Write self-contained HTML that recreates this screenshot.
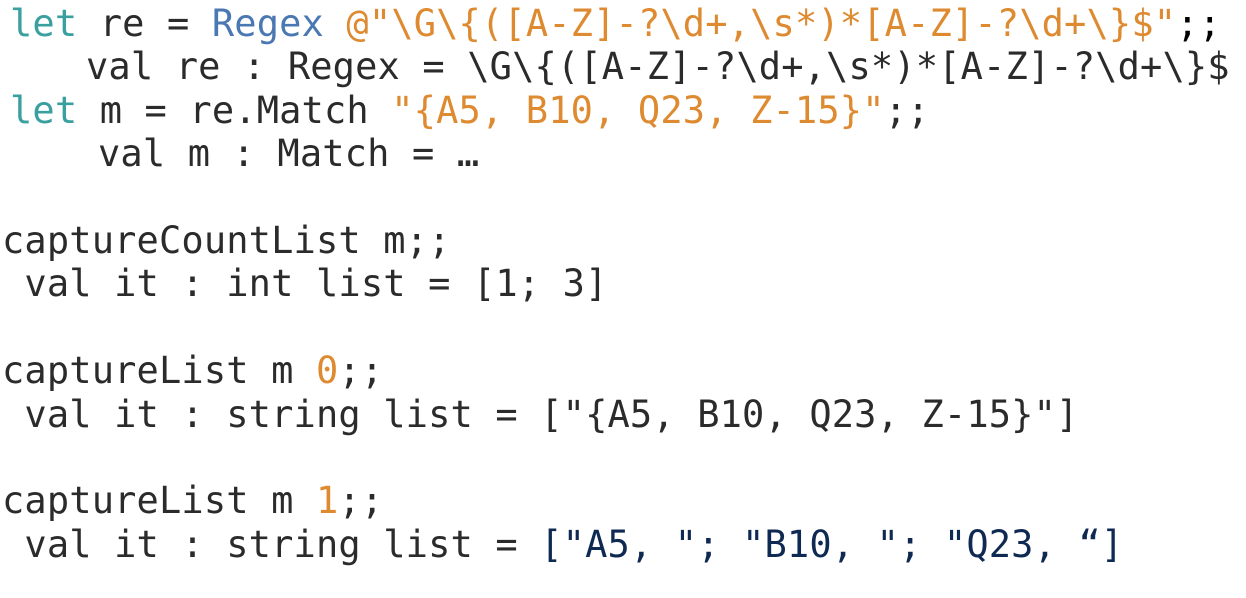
<!DOCTYPE html>
<html><head><meta charset="utf-8"><style>
html,body{margin:0;padding:0;background:#fff;width:1246px;height:598px;overflow:hidden}
.l{position:absolute;white-space:pre;font-family:"DejaVu Sans Mono","Liberation Mono",monospace;font-size:37px;line-height:43.4px;letter-spacing:0.15px;color:#2b2b2b}
.k{color:#3a9f9f}.t{color:#4a78b2}.s{color:#de8a30}.n{color:#0f2a52}.b{color:#000}
</style></head><body>
<div class="l" style="left:10px;top:2px"><span class="k">let</span> re = <span class="t">Regex</span> <span class="s">@"\G\{([A-Z]-?\d+,\s*)*[A-Z]-?\d+\}$"</span><span class="b">;;</span></div>
<div class="l" style="left:86px;top:45.4px">val re : Regex = \G\{([A-Z]-?\d+,\s*)*[A-Z]-?\d+\}$</div>
<div class="l" style="left:10px;top:88.8px"><span class="k">let</span> m = re.Match <span class="s">"{A5, B10, Q23, Z-15}"</span>;;</div>
<div class="l" style="left:98px;top:132.2px">val m : Match = …</div>
<div class="l" style="left:2px;top:219px">captureCountList m;;</div>
<div class="l" style="left:2px;top:262.4px"> val it : int list = [1; 3]</div>
<div class="l" style="left:2px;top:349.2px">captureList m <span class="s">0</span>;;</div>
<div class="l" style="left:2px;top:392.6px"> val it : string list = ["{A5, B10, Q23, Z-15}"]</div>
<div class="l" style="left:2px;top:479.4px">captureList m <span class="s">1</span>;;</div>
<div class="l" style="left:2px;top:522.8px"> val it : string list = <span class="n">["A5, "; "B10, "; "Q23, “]</span></div>
</body></html>
